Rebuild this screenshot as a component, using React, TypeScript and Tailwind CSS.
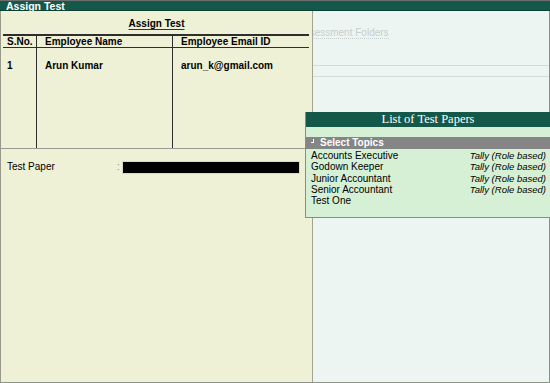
const topics = [
  { name: "Accounts Executive", kind: "Tally (Role based)" },
  { name: "Godown Keeper", kind: "Tally (Role based)" },
  { name: "Junior Accountant", kind: "Tally (Role based)" },
  { name: "Senior Accountant", kind: "Tally (Role based)" },
  { name: "Test One", kind: "" },
];

const App = () => {
  return (
    <div className="relative w-[550px] h-[383px] flex flex-col overflow-hidden bg-[#edf5f3] font-['Liberation_Sans',Arial,sans-serif] text-[10px] text-black">
      {/* title bar */}
      <div className="h-[11px] shrink-0 border-t border-[#6e6e6e] border-b border-b-[#0c4034] bg-[#135849] pl-[6px]">
        <span className="block text-white font-bold text-[10.5px] leading-[10px]">Assign Test</span>
      </div>

      <div className="flex flex-1 min-h-0 border-b border-[#8f9488]">
        {/* left panel */}
        <div className="w-[313px] shrink-0 bg-[#eef1d6] border-l border-[#9a9a8a] border-r border-r-[#a3a38f] flex flex-col">
          <div className="h-[23px] pt-[5px] text-center">
            <span className="font-bold underline underline-offset-2 decoration-[#333]">Assign Test</span>
          </div>

          {/* table */}
          <div className="mx-[2px] w-[306px] border-t-2 border-[#2e2e2e] h-[114px] flex flex-col">
            <div className="flex h-[12px] border-b border-[#2e2e2e] font-bold leading-[11px]">
              <div className="w-[34px] pl-[4px] border-r border-[#2e2e2e]">S.No.</div>
              <div className="w-[136px] pl-[8px] border-r border-[#2e2e2e]">Employee Name</div>
              <div className="flex-1 pl-[8px]">Employee Email ID</div>
            </div>
            <div className="flex flex-1 font-bold leading-[12px]">
              <div className="w-[34px] pl-[4px] pt-[12px] border-r border-[#2e2e2e]">1</div>
              <div className="w-[136px] pl-[8px] pt-[12px] border-r border-[#2e2e2e]">Arun Kumar</div>
              <div className="flex-1 pl-[8px] pt-[12px]">arun_k@gmail.com</div>
            </div>
          </div>

          <div className="border-t border-[#9b9b92] flex items-center h-[25px] pt-[12px]">
            <span className="w-[116px] pl-[6px] leading-[12px]">Test Paper</span>
            <span className="w-[5px] text-[#8a8a80] leading-[12px]">:</span>
            <div className="w-[178px] h-[13px] bg-black border border-[#d9d9c8]" />
          </div>
        </div>

        {/* right panel */}
        <div className="flex-1 flex flex-col border-r border-[#8e8e8e] overflow-hidden">
          <div className="h-[54px] pt-[16px]">
            <span className="block ml-[-15px] whitespace-nowrap text-[#c6cecc] leading-[12px]">
              <span className="border-b border-dotted border-[#c6cecc]">Assessment Folders</span>
            </span>
          </div>
          <div className="h-[12px] border-t border-b border-[#d3dbd9]" />
        </div>
      </div>

      {/* popup list */}
      <div className="absolute left-[305px] top-[112px] w-[245px] h-[106px] bg-[#d5f0d5] border-l border-[#8a8a8a] border-b border-b-[#8a8a8a] flex flex-col">
        <div className="h-[15px] bg-[#135849] text-center text-white font-['Liberation_Serif','Times_New_Roman',serif] text-[12.5px] leading-[15px]">
          List of Test Papers
        </div>
        <div className="h-[10px]" />
        <div className="h-[12px] bg-[#858585] flex items-center pl-[5px] text-white font-bold leading-[12px]">
          <span className="w-[3px] h-[4px] border-r border-b border-white mr-[6px] -mt-[4px]" />
          Select Topics
        </div>
        <div className="pl-[5px] pr-[4px] pt-[1px]">
          {topics.map((t) => (
            <div key={t.name} className="flex justify-between items-baseline leading-[11.3px]">
              <span>{t.name}</span>
              <span className="italic text-[9.5px]">{t.kind}</span>
            </div>
          ))}
        </div>
      </div>
    </div>
  );
};

export default App;
